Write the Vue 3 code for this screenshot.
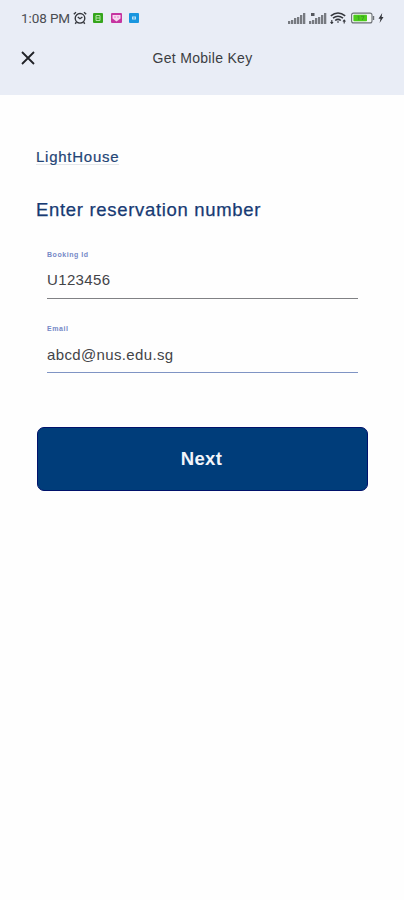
<script setup>
import { ref } from 'vue'

const bookingId = ref('U123456')
const email = ref('abcd@nus.edu.sg')

const bars = [3, 4, 6, 7, 9, 11]
</script>

<template>
  <div class="screen">
    <header class="header">
      <div class="status-bar">
        <span class="time">1:08 PM</span>
        <svg class="alarm" width="14" height="14" viewBox="0 0 14 14" fill="none" stroke="#34363c" stroke-width="1.4">
          <circle cx="7" cy="7.3" r="4.8" />
          <path d="M4.8 6l2.2 1.7L9.4 6M.8 3.2L3 1.2M13.2 3.2L11 1.2M3.4 11.3l-1.2 1.5M10.6 11.3l1.2 1.5" />
        </svg>
        <svg class="app-icon" width="10" height="10" viewBox="0 0 10 10">
          <rect width="10" height="10" rx="1" fill="#35a51c" />
          <path d="M3 2.5h4v5H3zM3 5h4" fill="none" stroke="#b3e4a5" />
        </svg>
        <svg class="app-icon" width="11" height="10" viewBox="0 0 11 10">
          <rect width="11" height="10" rx="1" fill="#c635a0" />
          <path d="M1.5 2h8v3.5L5.5 8.5l-4-3z" fill="#f7d8ef" />
          <path d="M3.5 4h1M6.5 4h1" stroke="#c635a0" />
        </svg>
        <svg class="app-icon app-icon-last" width="10" height="10" viewBox="0 0 10 10">
          <rect width="10" height="10" rx="1" fill="#1996df" />
          <rect x="3" y="3.5" width="4" height="3" fill="#b9e2f8" />
          <path d="M4 5h2" stroke="#1996df" stroke-width=".8" />
        </svg>
        <div class="system">
          <svg width="18" height="12" viewBox="0 0 18 12" fill="#777a80">
            <rect v-for="(h, i) in bars" :key="i" :x="i * 3" :y="12 - h" width="2.3" :height="h" />
          </svg>
          <svg width="18" height="12" viewBox="0 0 18 12" fill="#777a80">
            <rect v-for="(h, i) in bars" :key="i" :x="i * 3" :y="12 - h" width="2.3" :height="h" />
            <rect x="2" y="1" width="3.5" height="3" fill="#55585e" />
          </svg>
          <svg width="16" height="12" viewBox="0 0 16 12" fill="none" stroke="#34363c" stroke-width="1.6">
            <path d="M.8 3.8Q8-1.8 15.2 3.8M3 6.2q5-4 10 0M5.2 8.5q2.8-2.4 5.6 0" />
            <path d="M7 10h2M1.8 8v3.5M.5 10l1.3 1.5L3.1 10M14.2 11.5V8M12.9 9.5L14.2 8l1.3 1.5" stroke-width="1.1" />
          </svg>
          <svg class="battery" width="24" height="12" viewBox="0 0 24 12">
            <rect x=".6" y="1.1" width="20.4" height="9.8" rx="2" fill="#f2f5f4" stroke="#6c7075" stroke-width="1.1" />
            <rect x="2.4" y="2.7" width="13.6" height="6.6" rx=".8" fill="#4ccc1b" />
            <path d="M6.5 4.8l1.3-.7v4M10 4.3h3L11.3 8" fill="none" stroke="#3a9c20" stroke-width=".9" />
            <path d="M22.5 4v4" stroke="#6c7075" stroke-width="1.4" />
          </svg>
          <svg width="6" height="12" viewBox="0 0 6 12">
            <path d="M4.2 1L.5 6.8h2L1.6 11l3.9-5.9H3.6z" fill="#34363c" />
          </svg>
        </div>
      </div>
      <div class="title-bar">
        <button class="close" type="button" aria-label="Close">
          <svg width="14" height="14" viewBox="0 0 14 14">
            <path d="M1 1l12 12M13 1L1 13" stroke="#202227" stroke-width="1.8" />
          </svg>
        </button>
        <h1 class="title">Get Mobile Key</h1>
      </div>
    </header>

    <main class="content">
      <div class="property"><span>LightHouse</span></div>
      <h2 class="heading">Enter reservation number</h2>
      <form @submit.prevent>
        <label class="field">
          <span class="label">Booking Id</span>
          <input v-model="bookingId" type="text" />
        </label>
        <label class="field field-email">
          <span class="label">Email</span>
          <input v-model="email" type="text" />
        </label>
        <button class="next" type="submit">Next</button>
      </form>
    </main>
  </div>
</template>

<style>
body {
  background: #fefefe;
}
</style>

<style scoped>
.screen {
  min-height: 900px;
  background: #fefefe;
  font-family: "Liberation Sans", Arial, sans-serif;
}

.header {
  height: 95px;
  background: #e9edf6;
}

.status-bar {
  display: flex;
  align-items: center;
  height: 36px;
  padding: 0 20px 0 21px;
}

.time {
  width: 52px;
  font-family: Roboto, sans-serif;
  font-size: 13.5px;
  letter-spacing: -0.1px;
  color: #4b4d53;
  white-space: nowrap;
}

.app-icon {
  margin-left: 8px;
}

.alarm + .app-icon {
  margin-left: 6px;
}

.app-icon-last {
  margin-left: 7px;
}

.system {
  display: flex;
  align-items: center;
  gap: 3px;
  margin-left: auto;
}

.battery {
  margin-left: 2px;
}

.title-bar {
  display: grid;
  grid-template-columns: 40px 1fr 40px;
  align-items: center;
  height: 43px;
  padding: 0 19px 0 20px;
}

.close {
  display: flex;
  padding: 0 1px;
  border: 0;
  background: none;
}

.title {
  margin: 0;
  font-size: 14px;
  font-weight: 400;
  letter-spacing: 0.3px;
  text-align: center;
  color: #3b3d42;
}

.content {
  padding: 53px 36px 0;
}

.property {
  height: 18px;
  font-size: 15px;
  line-height: 18px;
  letter-spacing: 0.75px;
  color: #244576;
  -webkit-text-stroke: 0.2px #244576;
}

.property span {
  display: inline-block;
  height: 16px;
  border-bottom: 1px solid #e4e7ea;
}

.heading {
  margin: 33px 0 0;
  font-size: 18.5px;
  font-weight: 400;
  line-height: 22px;
  letter-spacing: 0.68px;
  color: #173a73;
  -webkit-text-stroke: 0.25px #173a73;
}

.field {
  display: block;
  height: 48px;
  margin: 29px 10px 0 11px;
  border-bottom: 1px solid #808184;
}

.field-email {
  margin-top: 25px;
  border-color: #7f94c4;
}

.label {
  display: block;
  height: 9px;
  font-size: 7px;
  font-weight: 700;
  line-height: 9px;
  letter-spacing: 0.55px;
  color: #7589c7;
}

.field input {
  display: block;
  width: 100%;
  height: 20px;
  margin-top: 10px;
  padding: 0;
  border: 0;
  outline: 0;
  background: none;
  font: 15px "Liberation Sans", Arial, sans-serif;
  letter-spacing: 0.36px;
  color: #434448;
}

.field-email input {
  margin-top: 11px;
}

.next {
  display: block;
  width: 331px;
  height: 64px;
  margin: 54px 0 0 1px;
  padding: 0 2px 0 0;
  border: 1px solid #00126b;
  border-radius: 7px;
  background: #003d7a;
  font: 700 18.5px "Liberation Sans", Arial, sans-serif;
  letter-spacing: 0.4px;
  color: #f2f5fa;
}
</style>
